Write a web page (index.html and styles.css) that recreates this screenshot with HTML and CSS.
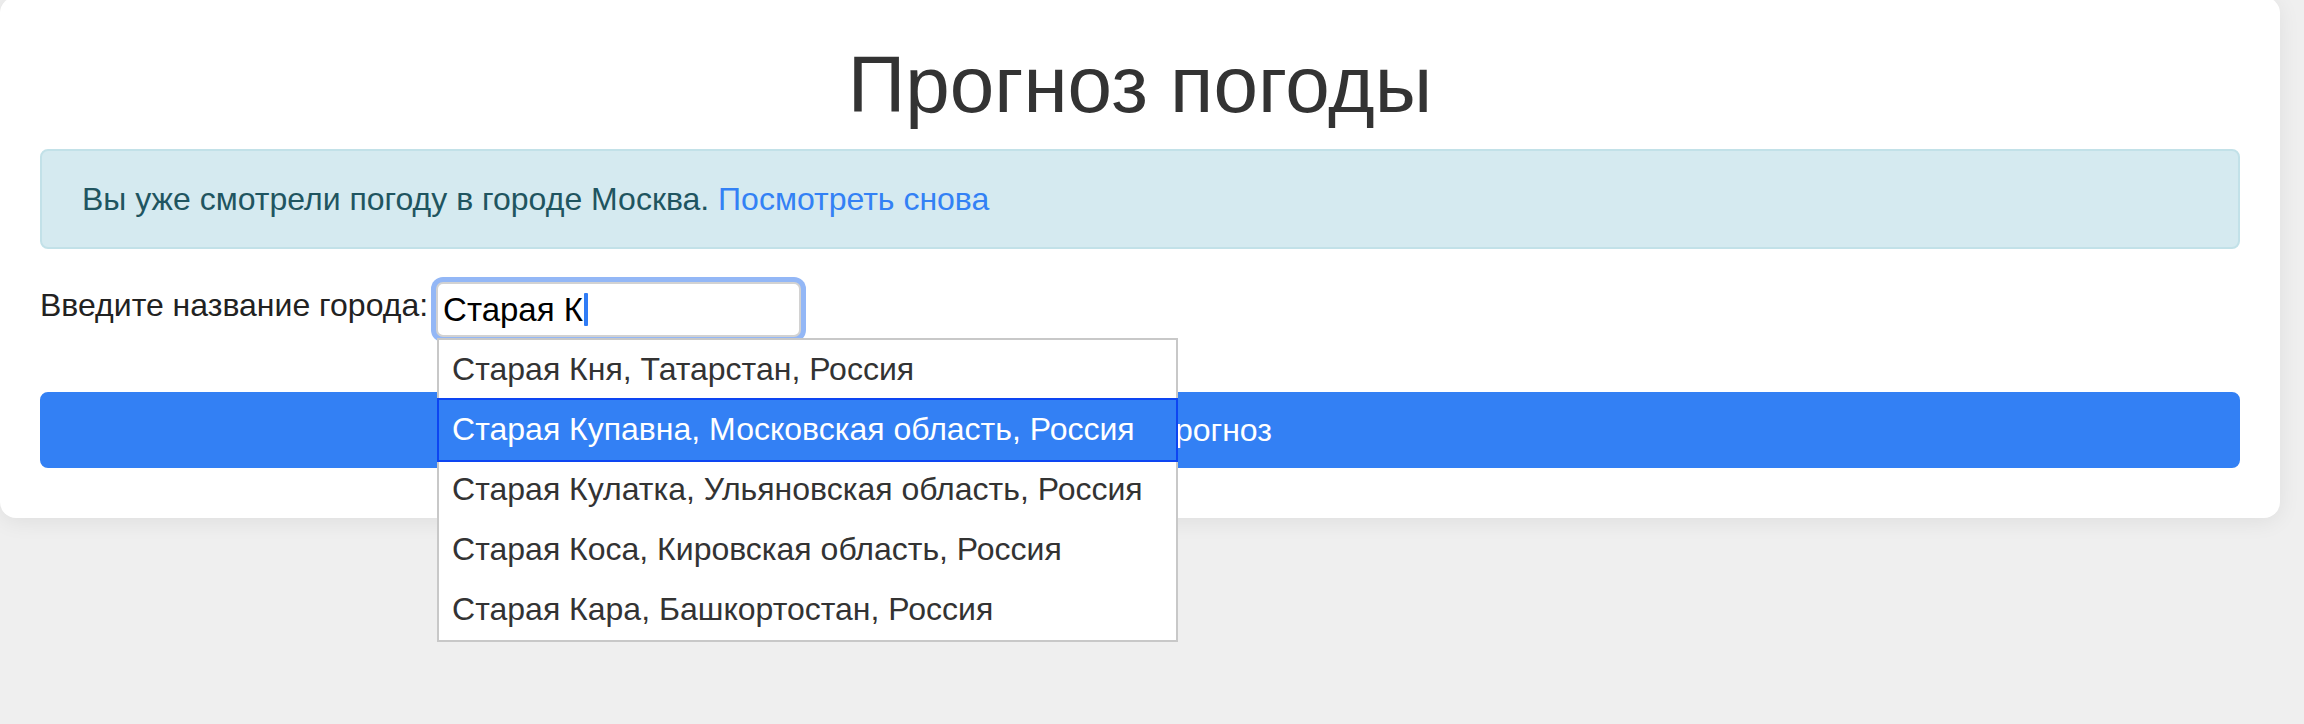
FILE: index.html
```html
<!DOCTYPE html>
<html lang="ru">
<head>
<meta charset="utf-8">
<title>Прогноз погоды</title>
<link rel="stylesheet" href="styles.css">
</head>
<body>
<div class="card">
  <h1 class="title">Прогноз погоды</h1>
  <div class="alert">Вы уже смотрели погоду в городе Москва. <a class="alert-link" href="#">Посмотреть снова</a></div>
  <div class="form-row">
    <label class="label" for="city">Введите название города:</label>
    <div class="field">
      <div class="input" id="city" role="textbox">Старая К<span class="caret"></span></div>
      <ul class="menu">
        <li class="menu-item">Старая Кня, Татарстан, Россия</li>
        <li class="menu-item active">Старая Купавна, Московская область, Россия</li>
        <li class="menu-item">Старая Кулатка, Ульяновская область, Россия</li>
        <li class="menu-item">Старая Коса, Кировская область, Россия</li>
        <li class="menu-item">Старая Кара, Башкортостан, Россия</li>
      </ul>
    </div>
  </div>
  <button class="btn" type="button">Получить прогноз</button>
</div>
</body>
</html>
```
FILE: styles.css
```css
html, body {
  margin: 0;
  padding: 0;
}
body {
  background: #efefef;
  font-family: "Liberation Sans", Arial, Helvetica, sans-serif;
  font-size: 32px;
  line-height: 48px;
  color: #212529;
  height: 724px;
  overflow: hidden;
}
.card {
  margin: -3px 24px 0 0;
  background: #ffffff;
  border-radius: 16px;
  box-shadow: 0 4px 22px rgba(0, 0, 0, 0.07);
  padding: 40px 40px 50px 40px;
}
.title {
  margin: 0 0 16px 0;
  font-size: 80px;
  line-height: 96px;
  font-weight: 400;
  color: #333333;
  text-align: center;
}
.alert {
  height: 48px;
  padding: 24px 40px;
  margin-bottom: 32px;
  background: #d5eaf0;
  border: 2px solid #c2e1e8;
  border-radius: 8px;
  color: #1f5560;
}
.alert-link {
  color: #3381f5;
  text-decoration: none;
}
.form-row {
  display: flex;
  align-items: flex-start;
  gap: 8px;
  margin-bottom: 55px;
}
.label {
  line-height: 48px;
  color: #222222;
}
.field {
  position: relative;
  padding-top: 1px;
}
.input {
  box-sizing: border-box;
  width: 365px;
  height: 55px;
  display: flex;
  align-items: center;
  padding: 0 5px;
  border: 2px solid #d2d2d2;
  border-radius: 7px;
  box-shadow: 0 0 0 5px #93b7f6;
  background: #ffffff;
  color: #000000;
  font-size: 33px;
  line-height: normal;
  white-space: pre;
}
.caret {
  display: inline-block;
  width: 4px;
  height: 33px;
  margin-left: 1px;
  background: #2f7cf6;
  border-radius: 1px;
}
.menu {
  position: absolute;
  top: 57px;
  left: 1px;
  width: 741px;
  box-sizing: border-box;
  margin: 0;
  padding: 0;
  list-style: none;
  background: #ffffff;
  border: 2px solid #c8c8c8;
  z-index: 10;
}
.menu-item {
  padding: 5px 32px 7px 13px;
  line-height: 48px;
  color: #333333;
  white-space: nowrap;
}
.menu-item.active {
  margin: -2px;
  border: 2px solid #0d45f2;
  background: #3380f4;
  color: #ffffff;
}
.btn {
  display: block;
  width: 100%;
  box-sizing: border-box;
  padding: 12px 24px;
  border: 2px solid #3380f4;
  border-radius: 8px;
  background: #3380f4;
  color: #ffffff;
  font-family: "Liberation Sans", Arial, Helvetica, sans-serif;
  font-size: 32px;
  line-height: 48px;
  text-align: center;
  cursor: pointer;
}
```
